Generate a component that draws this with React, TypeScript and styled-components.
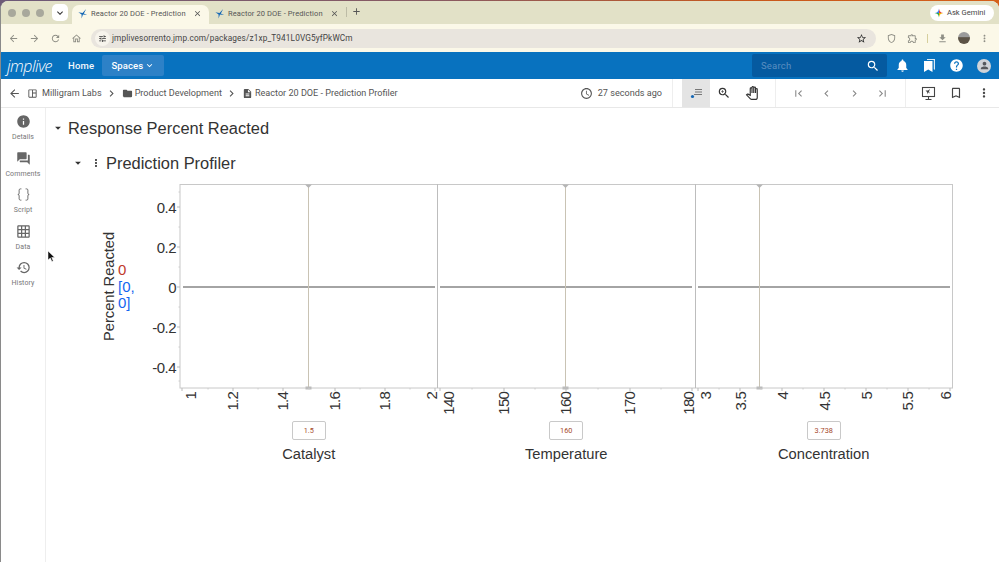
import React from "react";
import styled, { createGlobalStyle } from "styled-components";
import { Braces } from "lucide-react";
import {
  MdArrowBack, MdArrowForward, MdRefresh, MdOutlineHome, MdOutlineTune, MdStarBorder, MdOutlineExtension, MdFileDownload,
  MdMoreVert, MdClose, MdAdd, MdKeyboardArrowDown, MdSearch, MdNotifications, MdHelp, MdPerson,
  MdOutlineSpaceDashboard, MdFolder, MdDescription, MdChevronRight, MdChevronLeft, MdAccessTime, MdZoomIn, MdOutlinePanTool,
  MdFirstPage, MdLastPage, MdOutlineBookmarkBorder, MdInfo, MdForum, MdGridOn, MdHistory, MdArrowDropDown, MdOutlineShield,
} from "react-icons/md";

const Global = createGlobalStyle`
  html, body { margin: 0; padding: 0; background: #fff; }
  body { font-family: Roboto, "Liberation Sans", sans-serif; }
  * { box-sizing: border-box; }
`;

const Desktop = styled.div`
  position: relative; width: 999px; height: 562px; overflow: hidden;
  background: linear-gradient(90deg, #6d5a78 0%, #8a5a60 45%, #c8581c 75%, #d4601a 100%);
  padding-top: 1px;
`;
const Win = styled.div`
  height: 561px; background: #fff; border-radius: 8px 8px 0 0; overflow: hidden;
  display: flex; flex-direction: column; border-left: 1px solid #8a8a8a;
`;
const TabStrip = styled.div`
  height: 23px; flex: none; background: #e2e1c7; display: flex; align-items: flex-end; padding-left: 7px;
`;
const Lights = styled.div`
  display: flex; gap: 6px; align-self: center; margin-right: 8px; margin-top: 1px;
`;
const Light = styled.span`
  width: 8px; height: 8px; border-radius: 50%; background: #a8a89c;
`;
const TabMenu = styled.div`
  width: 16px; height: 17px; background: #fff; border-radius: 5px; display: flex; align-items: center; justify-content: center;
  align-self: center; margin-right: 4px; color: #333; font-size: 12px;
`;
const Tab = styled.div<{ $active?: boolean }>`
  width: 137px; height: 19px; display: flex; align-items: center; padding: 0 0 2px 5px;
  border-radius: 7px 7px 0 0; background: ${(p) => (p.$active ? "#fbf8e8" : "transparent")};
  font-size: 7.5px; color: #555; white-space: nowrap;
`;
const TabTitle = styled.span`
  width: 102px; margin-left: 3px; letter-spacing: 0.1px;
`;
const TabAdd = styled.div`
  margin: 0 0 2px 0; align-self: center; color: #555; font-size: 11px; display: flex; padding-left: 4px; border-left: 1px solid #bdbca6; height: 10px; align-items: center;
`;
const Gemini = styled.div`
  margin-left: auto; margin-right: 5px; align-self: center; width: 64px; height: 16px; border-radius: 8px; background: #fff;
  display: flex; align-items: center; gap: 3px; padding-left: 4px; font-size: 7.6px; color: #444; white-space: nowrap;
`;
const AddressBar = styled.div`
  height: 28px; flex: none; background: #fbf8e8; display: flex; align-items: center; padding-left: 2px; color: #8f8f86; font-size: 11px;
`;
const NavBtn = styled.span<{ $w?: number }>`
  width: ${(p) => p.$w ?? 21}px; display: flex; justify-content: center; align-items: center;
`;
const Omnibox = styled.div`
  width: 785px; height: 19px; margin-left: 5px; border-radius: 10px; background: #e9e5de; display: flex; align-items: center;
  padding: 0 9px 0 4px; color: #333; margin-right: 5px;
`;
const SiteIcon = styled.span`
  width: 15px; height: 15px; border-radius: 50%; background: #f7f4ec; display: flex; align-items: center; justify-content: center; margin-right: 2px; font-size: 9px;
`;
const Url = styled.span`
  font-size: 8.25px; color: #444; letter-spacing: 0.12px; flex: 1;
`;
const VSep = styled.span`
  width: 1px; height: 9px; background: #d6cf9d; margin: 0 4px;
`;
const Avatar = styled.span`
  width: 12px; height: 12px; border-radius: 50%; background: linear-gradient(#9a9a9a 45%, #5c5346 46%);
`;
const AppBar = styled.header`
  height: 27px; flex: none; background: #0872bf; display: flex; align-items: center; color: #fff; padding-left: 6px;
`;
const Logo = styled.div`
  width: 47px; font-family: "Open Sans", sans-serif; font-style: italic; font-size: 16px; letter-spacing: -0.5px; font-weight: 300; margin-right: 14px; white-space: nowrap;
`;
const HomeLink = styled.span`
  font-size: 9.5px; font-weight: 500; margin-right: 8px; opacity: .95; letter-spacing: .2px;
`;
const SpacesBtn = styled.div`
  width: 62px; height: 21px; border-radius: 2px; background: #2d81c7; font-size: 9.5px; font-weight: 500; display: flex; align-items: center; justify-content: center; gap: 1px;
  letter-spacing: .1px;
`;
const SearchBox = styled.div`
  width: 135px; height: 23px; margin-left: auto; border-radius: 2px; background: #055aa0; display: flex; align-items: center; justify-content: space-between;
  padding: 0 7px 0 9px; color: #fff; font-size: 9.5px;
`;
const SearchHint = styled.span`
  color: #5b8fc0; letter-spacing: .2px;
`;
const BarIcons = styled.div`
  display: flex; width: 112px; align-items: center; justify-content: space-around; padding: 0 1px; font-size: 15px;
`;
const UserDot = styled.span`
  width: 14px; height: 14px; border-radius: 50%; background: #cfd3d8; color: #55585c; display: flex; align-items: center; justify-content: center; font-size: 11px;
`;
const CrumbBar = styled.div`
  height: 29px; flex: none; border-bottom: 1px solid #e8e8e8; display: flex; align-items: center; padding-left: 5px; color: #555; font-size: 9.1px;
`;
const Crumb = styled.span<{ $gap?: number }>`
  margin-left: ${(p) => p.$gap ?? 0}px; white-space: nowrap;
`;
const CrumbIcon = styled.span<{ $w: number }>`
  display: flex; justify-content: center; width: ${(p) => p.$w}px; color: #555;
`;
const Updated = styled.div`
  margin-left: auto; display: flex; align-items: center; gap: 5px; padding-right: 10px; height: 100%;
`;
const ToolGroup = styled.div<{ $left?: number; $right?: number }>`
  display: flex; align-items: center; height: 100%; border-left: 1px solid #eee;
  padding: 0 ${(p) => p.$right ?? 9}px 0 ${(p) => p.$left ?? 8}px;
`;
const ToolCell = styled.span<{ $active?: boolean; $w?: number; $color?: string }>`
  width: ${(p) => p.$w ?? 28}px; height: 100%; display: flex; align-items: center; justify-content: center;
  background: ${(p) => (p.$active ? "#e4e4e4" : "transparent")}; color: ${(p) => p.$color ?? "#444"};
`;
const Body = styled.div`
  flex: 1; display: flex; min-height: 0;
`;
const Side = styled.nav`
  width: 45px; flex: none; border-right: 1px solid #eee; padding-top: 6px; display: flex; flex-direction: column; gap: 4.5px;
`;
const SideItem = styled.div`
  height: 32px; display: flex; flex-direction: column; align-items: center; color: #666; font-size: 7px; letter-spacing: .1px; gap: 4px;
`;
const SideLabel = styled.span`
  color: #777; line-height: 9px;
`;
const Main = styled.main`
  flex: 1; min-width: 0; color: #333; font-family: "Liberation Sans", Arial, sans-serif;
`;
const Heading = styled.div<{ $indent: number; $top: number }>`
  display: flex; align-items: center; height: 24px; margin-top: ${(p) => p.$top}px; padding-left: ${(p) => p.$indent}px; font-size: 16.45px; color: #333;
`;
const Caret = styled.span<{ $right: number }>`
  width: 14px; display: flex; justify-content: center; margin-right: ${(p) => p.$right}px; font-size: 14px;
`;
const Chart = styled.svg`
  display: block; margin-top: 5px;
`;
const Factors = styled.div`
  display: grid; grid-template-columns: 257.5px 257.5px 257.5px; padding-left: 134px; margin-top: 3px;
`;
const Factor = styled.div`
  display: flex; flex-direction: column; align-items: center; gap: 3px;
`;
const ValueBox = styled.div`
  width: 34px; height: 19px; border: 1px solid #c9c9c9; border-radius: 2px; color: #a5482a; font-size: 7.3px; font-family: Roboto, sans-serif; display: flex; align-items: center; justify-content: center;
`;
const FactorName = styled.div`
  font-size: 14.7px; color: #333; line-height: 22px;
`;
const Pointer = styled.svg`
  position: absolute; left: 47px; top: 250px;
`;

const Spark = ({ size = 11 }: { size?: number }) => (
  <svg width={size} height={size} viewBox="0 0 24 24" style={{ flex: "none" }}>
    <path d="M3 9 L12 11 L20 2 L15 12 L22 15 L13 14 L10 23 L10 14 Z" fill="#1668b5" />
  </svg>
);
const GeminiStar = () => (
  <svg width="10" height="10" viewBox="0 0 24 24" style={{ flex: "none" }}>
    <path d="M12 1 Q13 11 23 12 L12 12 Z" fill="#e8483c" />
    <path d="M23 12 Q13 13 12 23 L12 12 Z" fill="#f4b400" />
    <path d="M12 23 Q11 13 1 12 L12 12 Z" fill="#34a853" />
    <path d="M1 12 Q11 11 12 1 L12 12 Z" fill="#4285f4" />
  </svg>
);
const Bookmarks = () => (
  <svg width="13" height="15" viewBox="0 0 13 15">
    <path d="M4 1h8v11l-1.2-1V2H4z" fill="#fff" opacity=".85" />
    <path d="M1 3h8.5v11L5.2 11.4 1 14z" fill="#fff" />
  </svg>
);
const Present = () => (
  <svg width="15" height="15" viewBox="0 0 15 15" fill="none" stroke="#444">
    <rect x="1.5" y="1.5" width="12" height="9" strokeWidth="1.1" />
    <path d="M7.5 10.5v2.5M4.5 13.5h6" strokeWidth="1.1" />
    <path d="M4.5 4.5h2.5l2-1.5-1 2.5.8 2-1.8-1.2-.8 2.2-.2-2.6z" fill="#444" stroke="none" />
  </svg>
);

const YT = [[207, "0.4"], [247, "0.2"], [287, "0"], [327, "-0.2"], [367, "-0.4"]] as const;
const XT: [number, number, string][] = [
  [182, 191, "1"], [233, 233, "1.2"], [283, 283, "1.4"], [335, 335, "1.6"], [385, 385, "1.8"], [435, 432, "2"],
  [440, 449, "140"], [504, 504, "150"], [566, 566, "160"], [630, 630, "170"], [692, 689, "180"],
  [698, 706, "3"], [740, 741, "3.5"], [782, 783, "4"], [824, 825, "4.5"], [866, 867, "5"], [908, 908, "5.5"], [950, 946, "6"],
];
const Minor = [192, 227, 267, 307, 347, 381];
const XMinor = [208, 258, 309, 360, 410, 472, 535, 598, 661, 719, 761, 803, 845, 887, 929];
const Cursors = [308, 565, 759];

const Profiler = () => (
  <Chart width={953} height={238} viewBox="46 180 953 238">
    <rect x="180" y="184.5" width="772.5" height="203.5" fill="#fff" stroke="#c8c8c8" />
    {[437.5, 695.5].map((x) => <line key={x} x1={x} x2={x} y1={184} y2={388} stroke="#bdbdbd" />)}
    {[[183, 435], [440, 692], [698, 950]].map(([a, b]) => <line key={a} x1={a} x2={b} y1={287} y2={287} stroke="#4a4a4a" strokeWidth="1.2" />)}
    {Cursors.map((x) => (
      <g key={x}>
        <line x1={x + 0.5} x2={x + 0.5} y1={185} y2={388} stroke="#c9c3b4" />
        <path d={`M${x - 3} 184.5 h7 l-3.5 3.5 z`} fill="#b5b5b5" />
        <rect x={x - 2.5} y={386.5} width="6" height="3" fill="#bcbcbc" />
      </g>
    ))}
    {YT.map(([y]) => <line key={y} x1={177} x2={180} y1={y} y2={y} stroke="#bbb" />)}
    {Minor.map((y) => <line key={y} x1={178.5} x2={180} y1={y} y2={y} stroke="#ccc" />)}
    {XT.map(([x]) => <line key={x} x1={x} x2={x} y1={388} y2={391} stroke="#bbb" />)}
    {XMinor.map((x) => <line key={x} x1={x} x2={x} y1={388} y2={389.5} stroke="#ccc" />)}
    <g fontFamily="'Liberation Sans', Arial, sans-serif" fontSize="15" fill="#333" transform="translate(-1 0)">
      {YT.map(([y, t]) => <text key={t} x={177} y={y + 5.5} textAnchor="end" letterSpacing="-0.5">{t}</text>)}
      {XT.map(([, x, t]) => (
        <text key={t + x} transform={`translate(${x + 5.5} 392) rotate(-90)`} textAnchor="end" letterSpacing="-0.8">{t}</text>
      ))}
      <text transform="translate(115 341) rotate(-90)" fontSize="14.66">Percent Reacted</text>
      <text x="119" y="275" fill="#c0392b">0</text>
      <text x="119" y="292" fill="#1466f0">[0,</text>
      <text x="119" y="308" fill="#1466f0">0]</text>
    </g>
  </Chart>
);

const sideItems = [
  { label: "Details", icon: <MdInfo size={15} /> },
  { label: "Comments", icon: <MdForum size={15} /> },
  { label: "Script", icon: <Braces size={15} strokeWidth={1.5} /> },
  { label: "Data", icon: <MdGridOn size={15} /> },
  { label: "History", icon: <MdHistory size={15} /> },
];
const factors = [["1.5", "Catalyst"], ["160", "Temperature"], ["3.738", "Concentration"]];

export default function App() {
  return (
    <>
      <Global />
      <Desktop>
        <Win>
          <TabStrip>
            <Lights><Light /><Light /><Light /></Lights>
            <TabMenu><MdKeyboardArrowDown /></TabMenu>
            <Tab $active><Spark /><TabTitle>Reactor 20 DOE - Prediction</TabTitle><MdClose size={9} /></Tab>
            <Tab><Spark /><TabTitle>Reactor 20 DOE - Prediction</TabTitle><MdClose size={9} /></Tab>
            <TabAdd><MdAdd /></TabAdd>
            <Gemini><GeminiStar />Ask Gemini</Gemini>
          </TabStrip>
          <AddressBar>
            <NavBtn><MdArrowBack /></NavBtn>
            <NavBtn><MdArrowForward /></NavBtn>
            <NavBtn><MdRefresh /></NavBtn>
            <NavBtn $w={20}><MdOutlineHome /></NavBtn>
            <Omnibox>
              <SiteIcon><MdOutlineTune /></SiteIcon>
              <Url>jmplivesorrento.jmp.com/packages/z1xp_T941L0VG5yfPkWCm</Url>
              <MdStarBorder size={11} />
            </Omnibox>
            <NavBtn><MdOutlineShield /></NavBtn>
            <NavBtn><MdOutlineExtension /></NavBtn>
            <VSep />
            <NavBtn><MdFileDownload /></NavBtn>
            <NavBtn $w={22}><Avatar /></NavBtn>
            <NavBtn $w={18}><MdMoreVert /></NavBtn>
          </AddressBar>
          <AppBar>
            <Logo>jmplive</Logo>
            <HomeLink>Home</HomeLink>
            <SpacesBtn>Spaces <MdKeyboardArrowDown size={11} /></SpacesBtn>
            <SearchBox><SearchHint>Search</SearchHint><MdSearch size={14} /></SearchBox>
            <BarIcons>
              <MdNotifications />
              <Bookmarks />
              <MdHelp />
              <UserDot><MdPerson /></UserDot>
            </BarIcons>
          </AppBar>
          <CrumbBar>
            <CrumbIcon $w={17}><MdArrowBack size={13} /></CrumbIcon>
            <CrumbIcon $w={19}><MdOutlineSpaceDashboard size={11} /></CrumbIcon>
            <Crumb>Milligram Labs</Crumb>
            <CrumbIcon $w={20}><MdChevronRight size={13} /></CrumbIcon>
            <MdFolder size={11} color="#555" />
            <Crumb $gap={2}>Product Development</Crumb>
            <CrumbIcon $w={20}><MdChevronRight size={13} /></CrumbIcon>
            <MdDescription size={11} color="#555" />
            <Crumb $gap={2}>Reactor 20 DOE - Prediction Profiler</Crumb>
            <Updated><MdAccessTime size={13} />27 seconds ago</Updated>
            <ToolGroup $left={9} $right={9}>
              <ToolCell $active>
                <svg width="13" height="11" viewBox="0 0 13 11">
                  <circle cx="2.5" cy="8.5" r="1.6" fill="#1668b5" />
                  <path d="M5 1.5h7M5 4h7M4 6.5h8" stroke="#777" strokeWidth="1.2" />
                </svg>
              </ToolCell>
              <ToolCell><MdZoomIn size={14} color="#333" /></ToolCell>
              <ToolCell><MdOutlinePanTool size={14} color="#333" /></ToolCell>
            </ToolGroup>
            <ToolGroup>
              <ToolCell $color="#888"><MdFirstPage size={13} /></ToolCell>
              <ToolCell $color="#888"><MdChevronLeft size={13} /></ToolCell>
              <ToolCell $color="#888"><MdChevronRight size={13} /></ToolCell>
              <ToolCell $color="#888"><MdLastPage size={13} /></ToolCell>
            </ToolGroup>
            <ToolGroup $right={1}>
              <ToolCell><Present /></ToolCell>
              <ToolCell><MdOutlineBookmarkBorder size={14} /></ToolCell>
              <ToolCell><MdMoreVert size={14} /></ToolCell>
            </ToolGroup>
          </CrumbBar>
          <Body>
            <Side>
              {sideItems.map((s) => <SideItem key={s.label}>{s.icon}<SideLabel>{s.label}</SideLabel></SideItem>)}
            </Side>
            <Main>
              <Heading $indent={5} $top={8}><Caret $right={3}><MdArrowDropDown /></Caret>Response Percent Reacted</Heading>
              <Heading $indent={25} $top={11}>
                <Caret $right={4}><MdArrowDropDown /></Caret>
                <Caret $right={3}><MdMoreVert size={12} /></Caret>
                Prediction Profiler
              </Heading>
              <Profiler />
              <Factors>
                {factors.map(([v, n]) => (
                  <Factor key={n}><ValueBox>{v}</ValueBox><FactorName>{n}</FactorName></Factor>
                ))}
              </Factors>
            </Main>
          </Body>
        </Win>
        <Pointer width="9" height="13" viewBox="0 0 9 13">
          <path d="M1 1v9l2.3-2 1.6 3.6 1.4-.6-1.6-3.5h3z" fill="#111" stroke="#fff" strokeWidth=".5" />
        </Pointer>
      </Desktop>
    </>
  );
}
